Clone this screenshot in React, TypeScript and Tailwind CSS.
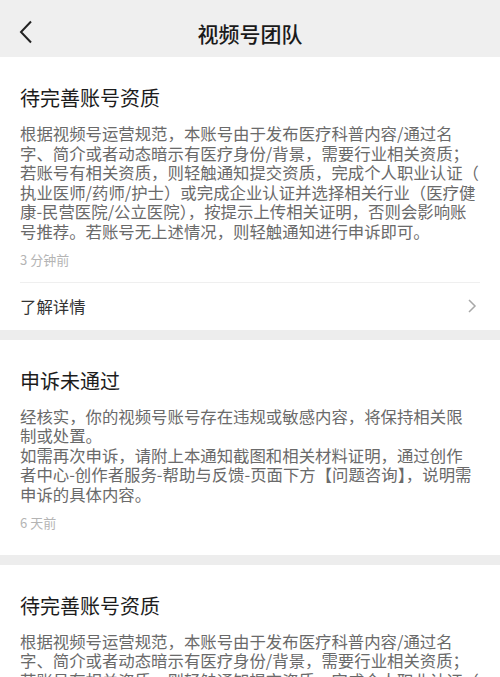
const font = { fontFamily: '"Noto Sans CJK SC", "Noto Sans", sans-serif' };

const qualifyLines = [
  "根据视频号运营规范，本账号由于发布医疗科普内容/通过名",
  "字、简介或者动态暗示有医疗身份/背景，需要行业相关资质；",
  "若账号有相关资质，则轻触通知提交资质，完成个人职业认证（",
  "执业医师/药师/护士）或完成企业认证并选择相关行业（医疗健",
  "康-民营医院/公立医院），按提示上传相关证明，否则会影响账",
  "号推荐。若账号无上述情况，则轻触通知进行申诉即可。",
];

const appealLines = [
  "经核实，你的视频号账号存在违规或敏感内容，将保持相关限",
  "制或处置。",
  "如需再次申诉，请附上本通知截图和相关材料证明，通过创作",
  "者中心-创作者服务-帮助与反馈-页面下方【问题咨询】，说明需",
  "申诉的具体内容。",
];

function Body({ lines }: { lines: string[] }) {
  return (
    <div className="mt-[12px] text-[16.4px] leading-[19.6px] text-[#6a6a6a]">
      {lines.map((l, i) => (
        <div key={i} className="whitespace-nowrap">
          {l}
        </div>
      ))}
    </div>
  );
}

function Notice({
  title,
  lines,
  time,
  detail,
}: {
  title: string;
  lines: string[];
  time: string;
  detail?: boolean;
}) {
  return (
    <div className="bg-white">
      <div className="px-[20px] pt-[27px]">
        <h2 className="text-[20px] leading-[28px] text-[#1c1c1c]">{title}</h2>
        <Body lines={lines} />
        <p className="mt-[9px] text-[13px] leading-[18px] text-[#b4b4b4]">{time}</p>
      </div>
      {detail ? (
        <div className="mx-[20px] mt-[13px] border-t border-[#efefef]">
          <div className="flex h-[47px] items-center justify-between">
            <span className="text-[16.4px] text-[#333]">了解详情</span>
            <svg width="10" height="16" viewBox="0 0 10 16" className="mr-[3px]">
              <path d="M2 2l6 6-6 6" fill="none" stroke="#a8a8a8" strokeWidth="1.5" />
            </svg>
          </div>
        </div>
      ) : (
        <div className="h-[23px]" />
      )}
    </div>
  );
}

export default function App() {
  return (
    <div className="h-[677px] w-[500px] overflow-hidden bg-[#ededed]" style={font}>
      <header className="relative flex h-[57px] items-center justify-center bg-[#efefef] pt-[8px]">
        <svg
          width="14"
          height="24"
          viewBox="0 0 14 24"
          className="absolute left-[19px] top-[20px]"
        >
          <path d="M12 1.5L2 12l10 10.5" fill="none" stroke="#222" strokeWidth="2" />
        </svg>
        <h1 className="text-[21px] font-medium leading-[28px] text-[#1a1a1a]">视频号团队</h1>
      </header>
      <div className="flex flex-col gap-[10px]">
        <Notice title="待完善账号资质" lines={qualifyLines} time="3 分钟前" detail />
        <Notice title="申诉未通过" lines={appealLines} time="6 天前" />
        <Notice title="待完善账号资质" lines={qualifyLines} time="3 分钟前" detail />
      </div>
    </div>
  );
}
